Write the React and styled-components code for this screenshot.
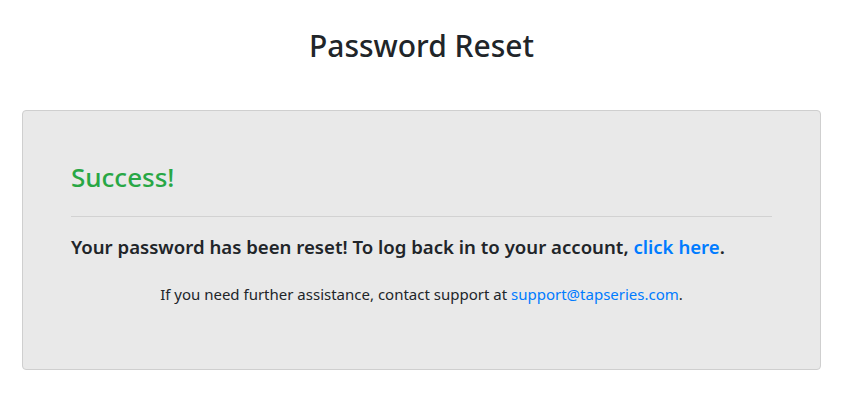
import styled, { createGlobalStyle } from "styled-components";

const GlobalStyle = createGlobalStyle`
  body {
    margin: 0;
    background: #fff;
    font-family: "Segoe UI", "Noto Sans", "Open Sans", sans-serif;
    color: #212529;
  }
`;

export default function App() {
  return (
    <>
      <GlobalStyle />
      <Page>
        <Title>Password Reset</Title>
        <Card>
          <Heading>Success!</Heading>
          <Rule />
          <Lead>
            Your password has been reset! To log back in to your account,{" "}
            <Link href="#">click here</Link>.
          </Lead>
          <Note>
            If you need further assistance, contact support at{" "}
            <Link href="#">support@tapseries.com</Link>.
          </Note>
        </Card>
      </Page>
    </>
  );
}

// STYLES

const Page = styled.div`
  padding: 24px 31px 0 22px;
`;

const Title = styled.h1`
  margin: 0 0 42px;
  text-align: center;
  font-size: 30px;
  font-weight: 500;
  line-height: 44px;
  color: #212529;
`;

const Card = styled.div`
  background: #e9e9e9;
  border: 1px solid #cfcfcf;
  border-radius: 4px;
  padding: 48px 48px 64px;
`;

const Heading = styled.h4`
  margin: 0;
  font-size: 26px;
  font-weight: 500;
  line-height: 36px;
  color: #28a745;
`;

const Rule = styled.hr`
  border: 0;
  border-top: 1px solid #d2d2d2;
  margin: 21px 0 16px;
`;

const Lead = styled.p`
  margin: 0 0 22px;
  font-size: 18.6px;
  font-weight: 600;
  line-height: 28px;
`;

const Note = styled.p`
  margin: 0;
  text-align: center;
  font-size: 15px;
  line-height: 22px;
`;

const Link = styled.a`
  color: #007bff;
  text-decoration: none;
`;
